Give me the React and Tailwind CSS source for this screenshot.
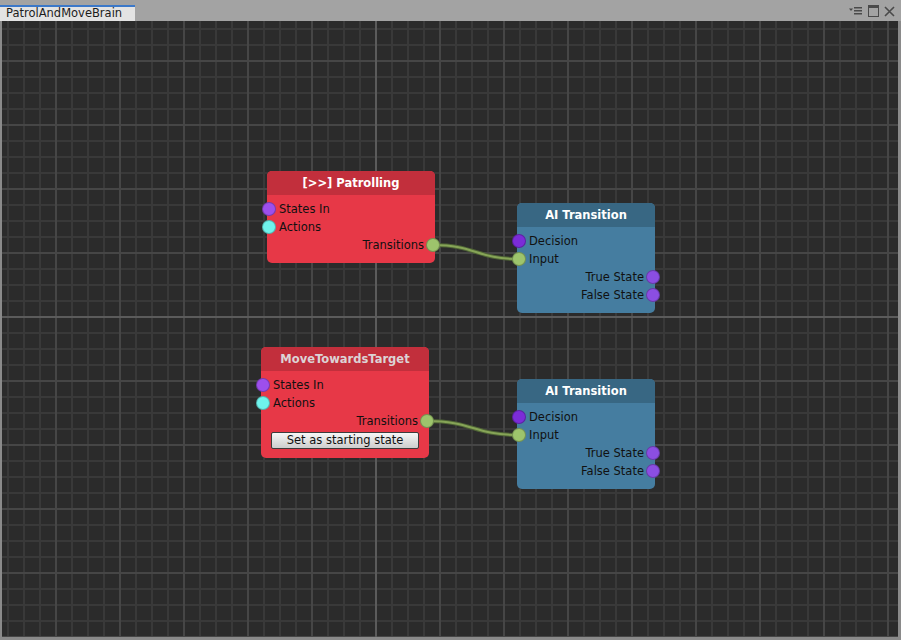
import React from 'react';

const FONT = "font-['DejaVu_Sans',sans-serif]";

const portColors = {
  stateIn: 'bg-[#9d4fec]',
  action: 'bg-[#6ff3ec]',
  flow: 'bg-[#9dc46c]',
  decision: 'bg-[#7b2cd8]',
  state: 'bg-[#8b4ee2]',
};

function Port({ kind, side }) {
  return (
    <span
      className={`absolute top-[2px] h-[14px] w-[14px] rounded-full border border-black/25 ${portColors[kind]} ${
        side === 'left' ? 'left-[-5px]' : 'right-[-5px]'
      }`}
    />
  );
}

function Row({ label, kind, side }) {
  return (
    <div
      className={`relative flex h-[18px] items-center text-[11.5px] text-[#111] ${
        side === 'left' ? 'justify-start pl-[12px]' : 'justify-end pr-[11px]'
      }`}
    >
      <span className="pt-[1px]">{label}</span>
      <Port kind={kind} side={side} />
    </div>
  );
}

function StateNode({ title, x, y, titleColor, children, rows }) {
  return (
    <div
      className={`absolute w-[168px] overflow-visible rounded-[5px] bg-[#e73847] ${FONT}`}
      style={{ left: x, top: y }}
    >
      <div
        className={`flex h-[24px] items-center justify-center rounded-t-[5px] bg-[#c22f3c] pt-[2px] text-[11.5px] font-bold ${titleColor}`}
      >
        {title}
      </div>
      <div className="pt-[5px] pb-[9px]">
        {rows.map((r) => (
          <Row key={r.label} {...r} />
        ))}
        {children}
      </div>
    </div>
  );
}

function TransitionNode({ x, y }) {
  return (
    <div
      className={`absolute w-[138px] rounded-[5px] bg-[#457da0] ${FONT}`}
      style={{ left: x, top: y }}
    >
      <div className="flex h-[24px] items-center justify-center rounded-t-[5px] bg-[#386783] pt-[2px] text-[11.5px] font-bold text-white">
        AI Transition
      </div>
      <div className="pt-[5px] pb-[9px]">
        <Row label="Decision" kind="decision" side="left" />
        <Row label="Input" kind="flow" side="left" />
        <Row label="True State" kind="state" side="right" />
        <Row label="False State" kind="state" side="right" />
      </div>
    </div>
  );
}

const stateRows = [
  { label: 'States In', kind: 'stateIn', side: 'left' },
  { label: 'Actions', kind: 'action', side: 'left' },
  { label: 'Transitions', kind: 'flow', side: 'right' },
];

function Link({ x1, y1, x2, y2 }) {
  const mx = (x1 + x2) / 2;
  const d = `M${x1} ${y1} C${mx} ${y1}, ${mx} ${y2}, ${x2} ${y2}`;
  return (
    <g fill="none">
      <path d={d} stroke="#4f6436" strokeWidth="4" />
      <path d={d} stroke="#86a457" strokeWidth="2" />
    </g>
  );
}

export default function App() {
  return (
    <div className={`relative flex h-[640px] w-[901px] flex-col overflow-hidden bg-[#a3a3a3] ${FONT}`}>
      {/* title bar */}
      <div className="relative flex h-[21px] shrink-0 items-end">
        <div className="flex h-[16px] w-[135px] items-center border-t-2 border-[#3b78c9] bg-[#e3e3e3] pl-[6px] text-[11.5px] text-[#1c1c1c]">
          PatrolAndMoveBrain
        </div>
        <div className="absolute right-[6px] top-[5px] flex items-center gap-[5px]">
          <svg width="14" height="10" viewBox="0 0 14 10">
            <path d="M0 2.5h4l-2 2.5z" fill="#4a4a4a" />
            <rect x="5" y="1" width="8" height="1.5" fill="#4a4a4a" />
            <rect x="5" y="4" width="8" height="1.5" fill="#4a4a4a" />
            <rect x="5" y="7" width="8" height="1.5" fill="#4a4a4a" />
          </svg>
          <svg width="11" height="12" viewBox="0 0 11 12">
            <rect x="0.5" y="0.5" width="10" height="11" fill="none" stroke="#4a4a4a" />
            <rect x="0.5" y="0.5" width="10" height="2.5" fill="#4a4a4a" />
          </svg>
          <svg width="11" height="11" viewBox="0 0 11 11">
            <path d="M1 1L10 10M10 1L1 10" stroke="#4a4a4a" strokeWidth="1.6" />
          </svg>
        </div>
      </div>

      {/* canvas grid */}
      <div className="flex-1 border-l-2 border-r-[3px] border-b-[3px] border-[#8a8a8a] bg-[#2b2b2b] bg-[image:linear-gradient(to_right,transparent_373px,#5b5b5b_373px,#5b5b5b_375px,transparent_375px),linear-gradient(to_bottom,transparent_295px,#5b5b5b_295px,#5b5b5b_297px,transparent_297px),linear-gradient(to_right,#464646_2px,transparent_2px),linear-gradient(to_bottom,#464646_2px,transparent_2px),linear-gradient(to_right,#393939_2px,transparent_2px),linear-gradient(to_bottom,#393939_2px,transparent_2px)] bg-[size:100%_100%,100%_100%,64px_64px,64px_64px,16px_16px,16px_16px] bg-[position:0_0,0_0,53px_39px,53px_39px,5px_7px,5px_7px]" />

      {/* connections */}
      <svg className="pointer-events-none absolute left-0 top-0" width="901" height="640">
        <Link x1={433} y1={245} x2={519} y2={259} />
        <Link x1={427} y1={421} x2={519} y2={435} />
      </svg>

      <StateNode title="[>>] Patrolling" x={267} y={171} titleColor="text-white" rows={stateRows} />
      <StateNode title="MoveTowardsTarget" x={261} y={347} titleColor="text-[#dcd3d5]" rows={stateRows}>
        <div className="px-[10px] pt-[2px]">
          <button className="flex h-[17px] w-full items-center justify-center rounded-[2px] border border-[#3c3c3c] bg-gradient-to-b from-[#f6f6f6] to-[#cdcdcd] text-[11.5px] text-[#111]">
            Set as starting state
          </button>
        </div>
      </StateNode>

      <TransitionNode x={517} y={203} />
      <TransitionNode x={517} y={379} />
    </div>
  );
}
